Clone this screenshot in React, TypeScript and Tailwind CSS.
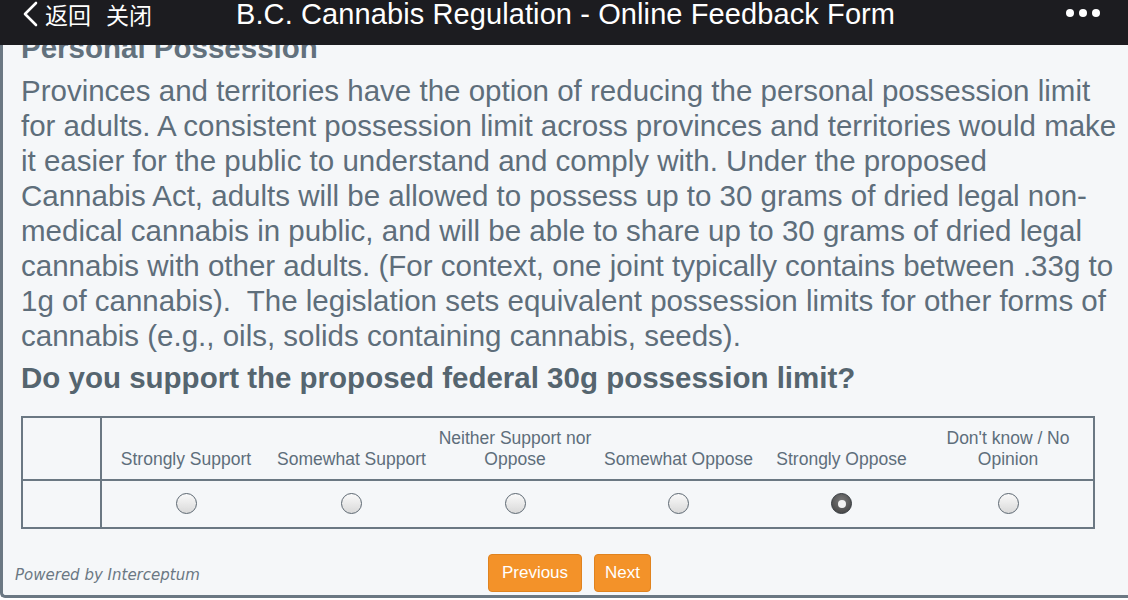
import React from 'react';

const options = [
  { label: 'Strongly Support', w: 'w-[169px]' },
  { label: 'Somewhat Support', w: 'w-[163px]' },
  { label: 'Neither Support nor Oppose', w: 'w-[164px]' },
  { label: 'Somewhat Oppose', w: 'w-[163px]' },
  { label: 'Strongly Oppose', w: 'w-[163px]' },
  { label: "Don't know / No Opinion", w: 'w-[171px]' },
];

function Radio({ checked }: { checked?: boolean }) {
  if (checked) {
    return (
      <span className="flex mx-auto items-center justify-center w-[21px] h-[21px] rounded-full border-[1.5px] border-[#3a3f44] bg-[radial-gradient(circle_at_50%_35%,#7a7a7a,#3c3c3c)]">
        <span className="w-[8px] h-[8px] rounded-full bg-[#f2f2f2]" />
      </span>
    );
  }
  return (
    <span className="block mx-auto w-[21px] h-[21px] rounded-full border-[1.5px] border-[#5d6872] bg-[linear-gradient(180deg,#fafafa,#d9d9d9)]" />
  );
}

export default function App() {
  return (
    <div className="w-[1128px] h-[600px] bg-white overflow-hidden font-['Liberation_Sans',Arial,sans-serif]">
      {/* Top bar */}
      <header className="h-[45px] bg-[#1c1c20] flex items-start text-white relative">
        <div className="flex items-center pl-[21px] pt-[2px] h-[26px]">
          <svg width="20" height="26" viewBox="0 0 20 26" className="mr-[4px]">
            <polyline points="15,2 4,13 15,24" fill="none" stroke="white" strokeWidth="2.6" strokeLinecap="round" strokeLinejoin="round" />
          </svg>
          <span className="text-[23px] leading-none font-['Noto_Sans_CJK_SC',sans-serif]">返回</span>
          <span className="text-[23px] leading-none ml-[15px] font-['Noto_Sans_CJK_SC',sans-serif]">关闭</span>
        </div>
        <div className="ml-[84px] text-[29px] leading-[28px] tracking-[0.1px]">
          B.C. Cannabis Regulation - Online Feedback Form
        </div>
        <div className="absolute right-[28px] top-[9px] flex gap-[5px]">
          <span className="w-[8px] h-[8px] rounded-full bg-white" />
          <span className="w-[8px] h-[8px] rounded-full bg-white" />
          <span className="w-[8px] h-[8px] rounded-full bg-white" />
        </div>
      </header>

      {/* Card */}
      <div className="h-[553px] bg-[#f5f7f9] border-l-[3px] border-b-[3px] border-[#6b7883] rounded-bl-[5px] overflow-hidden flex flex-col">
        <div className="ml-[18px] w-[1096px] text-[#5e6e7b]">
          <h2 className="-mt-[15px] text-[29.5px] leading-[35px] font-bold text-[#62717d]">Personal Possession</h2>
          <p className="mt-[8px] text-[29.5px] leading-[35px]">
            Provinces and territories have the option of reducing the personal possession limit for adults. A consistent possession limit across provinces and territories would make it easier for the public to understand and comply with. Under the proposed Cannabis Act, adults will be allowed to possess up to 30 grams of dried legal non-medical cannabis in public, and will be able to share up to 30 grams of dried legal cannabis with other adults. (For context, one joint typically contains between .33g to 1g of cannabis).&nbsp; The legislation sets equivalent possession limits for other forms of cannabis (e.g., oils, solids containing cannabis, seeds).
          </p>
          <p className="mt-[7px] text-[29.5px] leading-[35px] font-bold text-[#55656f]">
            Do you support the proposed federal 30g possession limit?
          </p>
        </div>

        <div className="pl-[18px] mt-[21px]">
          <table className="border-collapse border-2 border-[#6b7883] text-[#5e6e7b]">
            <tbody>
              <tr className="h-[63px]">
                <td className="w-[79px] border-2 border-[#6b7883]" />
                {options.map((o) => (
                  <td key={o.label} className={`${o.w} align-bottom text-center text-[17.5px] leading-[21px] pb-[9px] px-[4px] border-y-2 border-[#6b7883]`}>
                    {o.label}
                  </td>
                ))}
              </tr>
              <tr className="h-[48px]">
                <td className="border-2 border-[#6b7883]" />
                {options.map((o, i) => (
                  <td key={o.label} className="text-center align-middle pb-[1px]">
                    <Radio checked={i === 4} />
                  </td>
                ))}
              </tr>
            </tbody>
          </table>
        </div>

        <div className="mt-auto mb-[3px] grid grid-cols-[1fr_auto_1fr] items-center">
          <span className="pl-[12px] pt-[4px] italic text-[15px] text-[#6b7883] font-['DejaVu_Sans',Verdana,sans-serif]">
            Powered by Interceptum
          </span>
          <div className="flex gap-[12px] ml-[8px]">
            <button className="h-[38px] w-[94px] rounded-[4px] bg-[#f39229] border border-[#e0831f] text-white text-[17px]">Previous</button>
            <button className="h-[38px] w-[57px] rounded-[4px] bg-[#f39229] border border-[#e0831f] text-white text-[17px]">Next</button>
          </div>
          <span />
        </div>
      </div>
    </div>
  );
}
